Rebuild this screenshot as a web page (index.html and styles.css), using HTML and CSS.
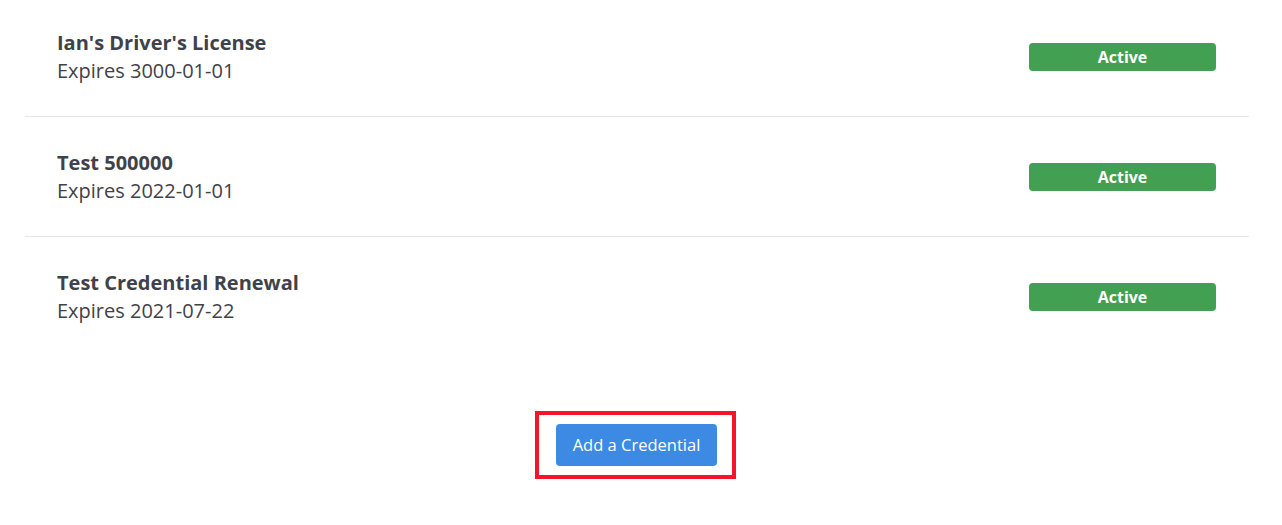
FILE: index.html
```html
<!DOCTYPE html>
<html>
<head>
<meta charset="utf-8">
<link rel="stylesheet" href="styles.css">
</head>
<body>
<div class="page">
  <ul class="list">
    <li class="row">
      <div class="info">
        <div class="title">Ian's Driver's License</div>
        <div class="sub">Expires 3000-01-01</div>
      </div>
      <span class="badge">Active</span>
    </li>
    <li class="row">
      <div class="info">
        <div class="title">Test 500000</div>
        <div class="sub">Expires 2022-01-01</div>
      </div>
      <span class="badge">Active</span>
    </li>
    <li class="row">
      <div class="info">
        <div class="title">Test Credential Renewal</div>
        <div class="sub">Expires 2021-07-22</div>
      </div>
      <span class="badge">Active</span>
    </li>
  </ul>
  <div class="actions">
    <div class="highlight">
      <button class="btn">Add a Credential</button>
    </div>
  </div>
</div>
</body>
</html>
```
FILE: styles.css
```css
* { box-sizing: border-box; }
html, body { margin: 0; padding: 0; background: #fff; }
body {
  font-family: "Open Sans", "Noto Sans", sans-serif;
  color: #3f4249;
}
.page {
  margin: -3px 33px 0 25px;
}
.list {
  list-style: none;
  margin: 0;
  padding: 0;
}
.row {
  display: flex;
  align-items: center;
  justify-content: space-between;
  height: 120px;
  padding: 0 33px 0 32px;
  border-bottom: 1px solid #e6e6ea;
}
.row:last-child { border-bottom: none; }
.title {
  font-size: 20px;
  font-weight: 700;
  line-height: 28px;
}
.sub {
  font-size: 20px;
  font-weight: 400;
  line-height: 28px;
}
.badge {
  display: flex;
  align-items: center;
  justify-content: center;
  width: 187px;
  height: 28px;
  border-radius: 4px;
  background: #41a052;
  color: #fff;
  font-size: 16px;
  font-weight: 700;
}
.actions {
  display: flex;
  justify-content: center;
  padding-top: 54px;
}
.highlight {
  border: 4px solid #f5142e;
  padding: 9px 15px 9px 17px;
  margin-right: 3px;
}
.btn {
  width: 161px;
  height: 42px;
  padding: 0 0 2px;
  border: none;
  border-radius: 4px;
  background: #3d8ae4;
  color: #fff;
  font-family: "Open Sans", "Noto Sans", sans-serif;
  font-size: 16.5px;
  font-weight: 500;
  cursor: pointer;
}
```
